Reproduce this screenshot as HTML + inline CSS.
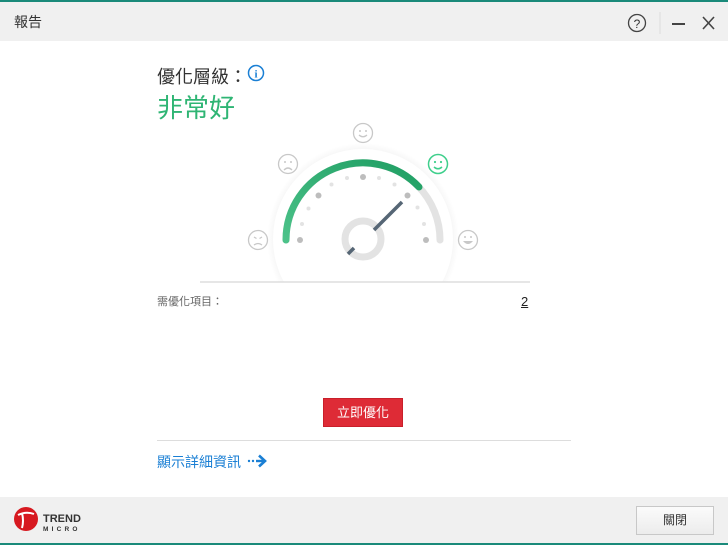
<!DOCTYPE html>
<html><head><meta charset="utf-8"><style>
body{margin:0;width:728px;height:545px;position:relative;background:#fff;font-family:"Liberation Sans","Noto Sans CJK TC",sans-serif;overflow:hidden}
.top{position:absolute;left:0;top:0;width:728px;height:2px;background:#1a8a7a}
.tb{position:absolute;left:0;top:2px;width:728px;height:39px;background:#f0f0f0}
.ft{position:absolute;left:0;top:497px;width:728px;height:46px;background:#f0f0f0}
.bot{position:absolute;left:0;top:543px;width:728px;height:2px;background:#1a8a7a}
.t{position:absolute;white-space:nowrap}
</style></head><body>
<div class="top"></div>
<div class="tb"></div>
<div class="t" style="left:14px;top:12px;font-size:14px;color:#333">報告</div>
<svg style="position:absolute;left:620px;top:8px" width="108" height="30">
<circle cx="17" cy="15" r="8.5" fill="none" stroke="#444" stroke-width="1.3"/>
<text x="17" y="20" font-size="12" text-anchor="middle" fill="#333" font-family="Liberation Sans">?</text>
<line x1="40" y1="4" x2="40" y2="26" stroke="#ddd"/>
<line x1="52" y1="16" x2="65" y2="16" stroke="#444" stroke-width="2"/>
<line x1="83" y1="9" x2="94" y2="21" stroke="#444" stroke-width="1.6"/>
<line x1="94" y1="9" x2="83" y2="21" stroke="#444" stroke-width="1.6"/>
</svg>
<div class="t" style="left:157px;top:63px;font-size:18px;color:#333">優化層級：</div>
<svg style="position:absolute;left:247px;top:64px" width="18" height="18"><circle cx="9" cy="9" r="7.5" fill="none" stroke="#1a7fd4" stroke-width="1.5"/><text x="9" y="13.5" font-size="11" font-weight="bold" text-anchor="middle" fill="#1a7fd4" font-family="Liberation Serif">i</text></svg>
<div class="t" style="left:157px;top:88px;font-size:26px;color:#2fb574">非常好</div>
<svg style="position:absolute;left:180px;top:110px" width="370" height="180" viewBox="180 110 370 180">
<defs><radialGradient id="g" cx="0.5" cy="1" r="0.6"><stop offset="0" stop-color="#f0f0f0"/><stop offset="1" stop-color="#fff"/></radialGradient>
<radialGradient id="c" cx="0.5" cy="0.5" r="0.5"><stop offset="0.9" stop-color="#f3f3f3"/><stop offset="1" stop-color="#fff"/></radialGradient>
<linearGradient id="gr" x1="0" y1="1" x2="1" y2="0"><stop offset="0" stop-color="#4cc289"/><stop offset="1" stop-color="#1f9e63"/></linearGradient></defs>
<ellipse cx="363" cy="282" rx="170" ry="22" fill="url(#g)"/>
<circle cx="363" cy="239" r="96" fill="url(#c)"/>
<circle cx="363" cy="239" r="90" fill="#fff"/>
<rect x="180" y="282" width="370" height="10" fill="#fff"/>
<line x1="200" y1="282" x2="530" y2="282" stroke="#ddd" stroke-width="1.5"/>
<path d="M286 240 A77 77 0 0 1 440 240" fill="none" stroke="#e3e3e3" stroke-width="7" stroke-linecap="round"/>
<path d="M286 240 A77 77 0 0 1 419 187" fill="none" stroke="url(#gr)" stroke-width="7" stroke-linecap="round"/>
<g fill="#bdbdbd">
<circle cx="300" cy="240" r="3"/><circle cx="318.5" cy="195.5" r="3"/><circle cx="363" cy="177" r="3"/><circle cx="407.5" cy="195.5" r="3"/><circle cx="426" cy="240" r="3"/>
</g>
<g fill="#e3e3e3">
<circle cx="302" cy="224" r="2"/><circle cx="308.5" cy="208.5" r="2"/><circle cx="331.5" cy="184.5" r="2"/><circle cx="347" cy="178" r="2"/><circle cx="379" cy="178" r="2"/><circle cx="394.5" cy="184.5" r="2"/><circle cx="417.5" cy="207.5" r="2"/><circle cx="424" cy="224" r="2"/>
</g>
<circle cx="363" cy="239" r="18" fill="none" stroke="#e3e3e3" stroke-width="7"/>
<line x1="374" y1="230" x2="402" y2="202" stroke="#566675" stroke-width="3.5"/>
<line x1="348" y1="254" x2="354" y2="248" stroke="#566675" stroke-width="3.5"/>
<g fill="none" stroke="#c8c8c8" stroke-width="1.3">
<circle cx="258" cy="240" r="9.5"/><circle cx="288" cy="164" r="9.5"/><circle cx="363" cy="133" r="9.5"/><circle cx="468" cy="240" r="9.5"/>
<path d="M254 237l2.5 1.5M262 237l-2.5 1.5M254 245q4-3 8 0"/>
<path d="M284 170q4-4 8 0"/><path d="M359 135q4 3.5 8 0"/>
</g>
<g fill="#c8c8c8"><circle cx="285" cy="162" r="1"/><circle cx="291" cy="162" r="1"/><circle cx="360" cy="131" r="1"/><circle cx="366" cy="131" r="1"/><circle cx="465" cy="237" r="1"/><circle cx="471" cy="237" r="1"/><path d="M463 241h10q-5 6-10 0z"/></g>
<circle cx="438" cy="164" r="9.5" fill="none" stroke="#3fcf8c" stroke-width="1.5"/>
<g fill="#3fcf8c"><circle cx="435" cy="162" r="1.1"/><circle cx="441" cy="162" r="1.1"/></g>
<path d="M434 167q4 3.5 8 0" fill="none" stroke="#3fcf8c" stroke-width="1.5"/>
</svg>
<div class="t" style="left:157px;top:293px;font-size:11px;color:#666">需優化項目：</div>
<div class="t" style="left:521px;top:294px;font-size:13px;color:#222;text-decoration:underline">2</div>
<div style="position:absolute;left:323px;top:398px;width:80px;height:29px;background:#de2b36;border:1px solid #c91f2a;box-sizing:border-box;color:#fff;font-size:13px;text-align:center;line-height:27px">立即優化</div>
<div style="position:absolute;left:157px;top:440px;width:414px;height:1px;background:#ddd"></div>
<div class="t" style="left:157px;top:452px;font-size:14px;color:#1a7fd4">顯示詳細資訊</div>
<svg style="position:absolute;left:247px;top:453px" width="20" height="16"><circle cx="2" cy="8" r="1.2" fill="#1a7fd4"/><circle cx="6" cy="8" r="1.2" fill="#1a7fd4"/><line x1="9" y1="8" x2="17" y2="8" stroke="#1a7fd4" stroke-width="2.4"/><path d="M12 2.5l6 5.5-6 5.5" fill="none" stroke="#1a7fd4" stroke-width="2.6"/></svg>
<div class="ft"></div>
<svg style="position:absolute;left:13px;top:506px" width="80" height="28">
<circle cx="13" cy="13" r="12" fill="#d71920"/>
<path d="M5 9q8-4 16-1M9 7q2 8 0 15" fill="none" stroke="#fff" stroke-width="2"/>
<text x="30" y="16" font-size="11" font-weight="bold" fill="#333" font-family="Liberation Sans">TREND</text>
<text x="30" y="25" font-size="6.5" font-weight="bold" letter-spacing="3.2" fill="#333" font-family="Liberation Sans">MICRO</text>
</svg>
<div style="position:absolute;left:636px;top:506px;width:78px;height:29px;border:1px solid #c8c8c8;background:linear-gradient(#fbfbfb,#ececec);box-sizing:border-box;font-size:12px;color:#333;text-align:center;line-height:27px">關閉</div>
<div class="bot"></div>
</body></html>
